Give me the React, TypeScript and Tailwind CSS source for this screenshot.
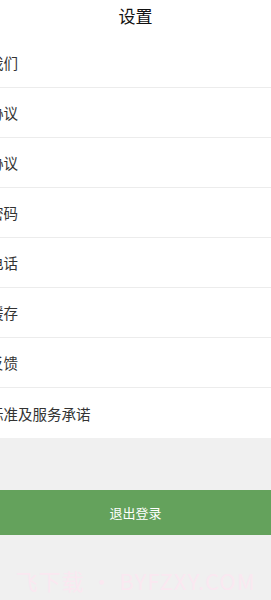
const items = [
  "关于我们",
  "用户协议",
  "隐私协议",
  "修改密码",
  "客服电话",
  "清除缓存",
  "意见反馈",
  "收费标准及服务承诺",
];

export default function App() {
  return (
    <div
      className="flex min-h-[600px] w-full flex-col overflow-hidden bg-[#f0f0f0]"
      style={{ fontFamily: '"Noto Sans CJK SC", "Noto Sans", sans-serif' }}
    >
      <div className="flex h-[38px] items-center justify-center bg-white pb-[8px]">
        <span className="text-[17px] leading-none text-[#111]">设置</span>
      </div>
      <div className="flex flex-col bg-white">
        {items.map((label, i) => (
          <div
            key={label}
            className={
              "flex h-[50px] items-center pt-[2px] " +
              (i < items.length - 1 ? "border-b border-[#ececec]" : "")
            }
          >
            <span className="ml-[-40px] whitespace-nowrap text-[14.5px] leading-none text-[#333]">
              {label}
            </span>
          </div>
        ))}
      </div>
      <button className="mt-[52px] flex h-[45px] w-full items-center justify-center bg-[#64a25c] text-[13px] text-white">
        退出登录
      </button>
      <div className="mt-[34px] flex justify-center">
        <span className="whitespace-nowrap text-[22px] leading-none tracking-[1px] text-[#fae8f1]">
          飞下载 • BYFZXY.COM
        </span>
      </div>
    </div>
  );
}
